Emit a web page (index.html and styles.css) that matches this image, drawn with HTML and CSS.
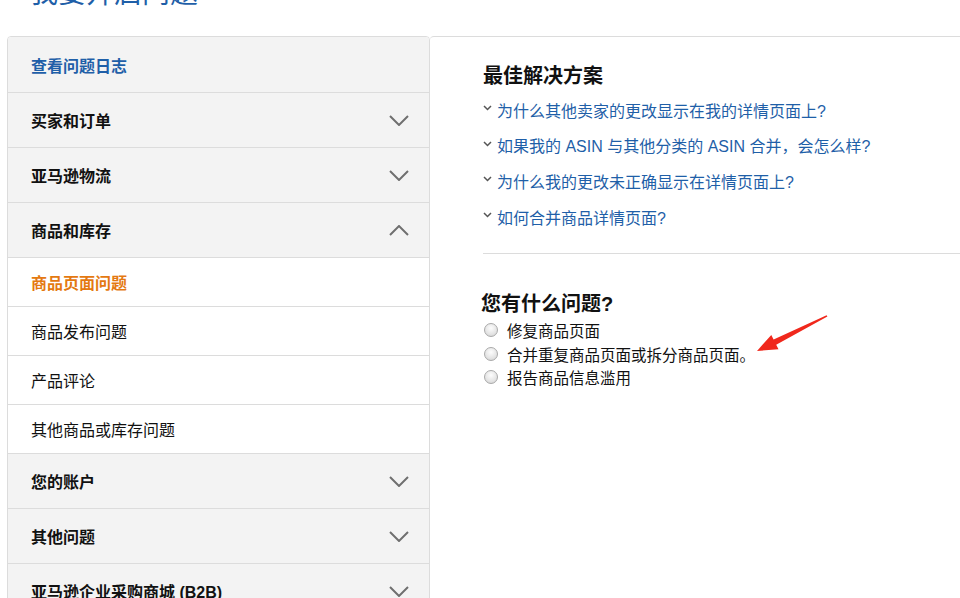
FILE: index.html
```html
<!DOCTYPE html>
<html lang="zh-CN">

<head>
    <meta charset="UTF-8">
    <title>我要开启问题</title>
    <link rel="stylesheet" href="styles.css">
</head>

<body>
    <h1 class="page-title">我要开启问题</h1>

    <div class="layout">
        <div class="sidebar">
            <div class="nav-head link-head">查看问题日志</div>
            <div class="nav-head">买家和订单
                <svg class="chev" viewBox="0 0 20 11"><path d="M1 1 L10 10 L19 1"/></svg>
            </div>
            <div class="nav-head">亚马逊物流
                <svg class="chev" viewBox="0 0 20 11"><path d="M1 1 L10 10 L19 1"/></svg>
            </div>
            <div class="nav-head">商品和库存
                <svg class="chev" viewBox="0 0 20 11"><path d="M1 10 L10 1 L19 10"/></svg>
            </div>
            <div class="nav-sub active">商品页面问题</div>
            <div class="nav-sub">商品发布问题</div>
            <div class="nav-sub">产品评论</div>
            <div class="nav-sub">其他商品或库存问题</div>
            <div class="nav-head">您的账户
                <svg class="chev" viewBox="0 0 20 11"><path d="M1 1 L10 10 L19 1"/></svg>
            </div>
            <div class="nav-head">其他问题
                <svg class="chev" viewBox="0 0 20 11"><path d="M1 1 L10 10 L19 1"/></svg>
            </div>
            <div class="nav-head">亚马逊企业采购商城 (B2B)
                <svg class="chev" viewBox="0 0 20 11"><path d="M1 1 L10 10 L19 1"/></svg>
            </div>
        </div>

        <div class="content">
            <h2>最佳解决方案</h2>
            <ul class="solutions">
                <li><svg class="mini-chev" viewBox="0 0 9 6"><path d="M1 1 L4.5 4.5 L8 1"/></svg>为什么其他卖家的更改显示在我的详情页面上?</li>
                <li><svg class="mini-chev" viewBox="0 0 9 6"><path d="M1 1 L4.5 4.5 L8 1"/></svg>如果我的 ASIN 与其他分类的 ASIN 合并，会怎么样?</li>
                <li><svg class="mini-chev" viewBox="0 0 9 6"><path d="M1 1 L4.5 4.5 L8 1"/></svg>为什么我的更改未正确显示在详情页面上?</li>
                <li><svg class="mini-chev" viewBox="0 0 9 6"><path d="M1 1 L4.5 4.5 L8 1"/></svg>如何合并商品详情页面?</li>
            </ul>
            <hr class="divider">
            <h2 class="question-title">您有什么问题?</h2>
            <ul class="options">
                <li><input type="radio" name="q" class="radio">修复商品页面</li>
                <li><input type="radio" name="q" class="radio">合并重复商品页面或拆分商品页面。</li>
                <li><input type="radio" name="q" class="radio">报告商品信息滥用</li>
            </ul>
        </div>
    </div>

    <svg class="arrow" viewBox="750 305 85 50">
        <polygon points="827.4,316.4 776.2,344.8 778.5,349.3 757,351 771.3,334.9 773.6,339.4 826.6,315.2"/>
    </svg>
</body>

</html>
```

FILE: styles.css
```css
body {
    margin: 0;
    font-family: "Liberation Sans", "Noto Sans CJK SC", sans-serif;
    color: #111;
    background: white;
    overflow: hidden;
}

.page-title {
    margin: -24px 0 0 30px;
    font-size: 28px;
    line-height: 36px;
    font-weight: normal;
    color: #1f5fa8;
}

.layout {
    display: flex;
    margin: 24px 0 0 7px;
}

.sidebar {
    width: 421px;
    flex-shrink: 0;
    border: 1px solid #dcdcdc;
    border-radius: 4px 4px 0 0;
    overflow: hidden;
}

.nav-head {
    display: flex;
    align-items: center;
    justify-content: space-between;
    height: 54px;
    padding: 0 20px 0 23px;
    background: #f3f3f3;
    border-bottom: 1px solid #dcdcdc;
    font-size: 16px;
    font-weight: bold;
    color: #111;
}

.link-head {
    height: 55px;
    color: #1f5fa8;
}

.chev {
    width: 20px;
    height: 11px;
    fill: none;
    stroke: #6f6f6f;
    stroke-width: 2;
}

.nav-sub {
    display: flex;
    align-items: center;
    height: 48px;
    padding-left: 23px;
    background: white;
    border-bottom: 1px solid #dcdcdc;
    font-size: 16px;
}

.nav-sub.active {
    color: #e47911;
    font-weight: bold;
}

.content {
    flex: 1;
    border-top: 1px solid #dcdcdc;
    border-top-left-radius: 4px;
    padding: 25px 0 0 53px;
}

.content h2 {
    margin: 0;
    font-size: 20px;
    line-height: 28px;
    font-weight: bold;
    color: #111;
}

.solutions {
    list-style: none;
    margin: 2px 0 0;
    padding: 0;
}

.solutions li {
    display: flex;
    align-items: center;
    height: 35.6px;
    font-size: 16px;
    color: #1f5fa8;
}

.mini-chev {
    width: 9px;
    height: 6px;
    margin: 0 5px 3px 0;
    fill: none;
    stroke: #555;
    stroke-width: 1.5;
}

.divider {
    border: none;
    border-top: 1px solid #dcdcdc;
    margin: 19px 0 0;
}

.content .question-title {
    margin: 36px 0 0 -2px;
}

.options {
    list-style: none;
    margin: 0;
    padding: 0;
}

.options li {
    display: flex;
    align-items: center;
    height: 23.5px;
    font-size: 15.5px;
    color: #111;
}

.radio {
    appearance: none;
    width: 14px;
    height: 14px;
    margin: 0 9px 0 1px;
    border: 1px solid #a9a9a9;
    border-radius: 50%;
    background: radial-gradient(circle at 50% 35%, #fdfdfd 0%, #e4e4e4 60%, #cfcfcf 100%);
}

.arrow {
    position: absolute;
    left: 750px;
    top: 305px;
    width: 85px;
    height: 50px;
    fill: #f0281c;
}
```
